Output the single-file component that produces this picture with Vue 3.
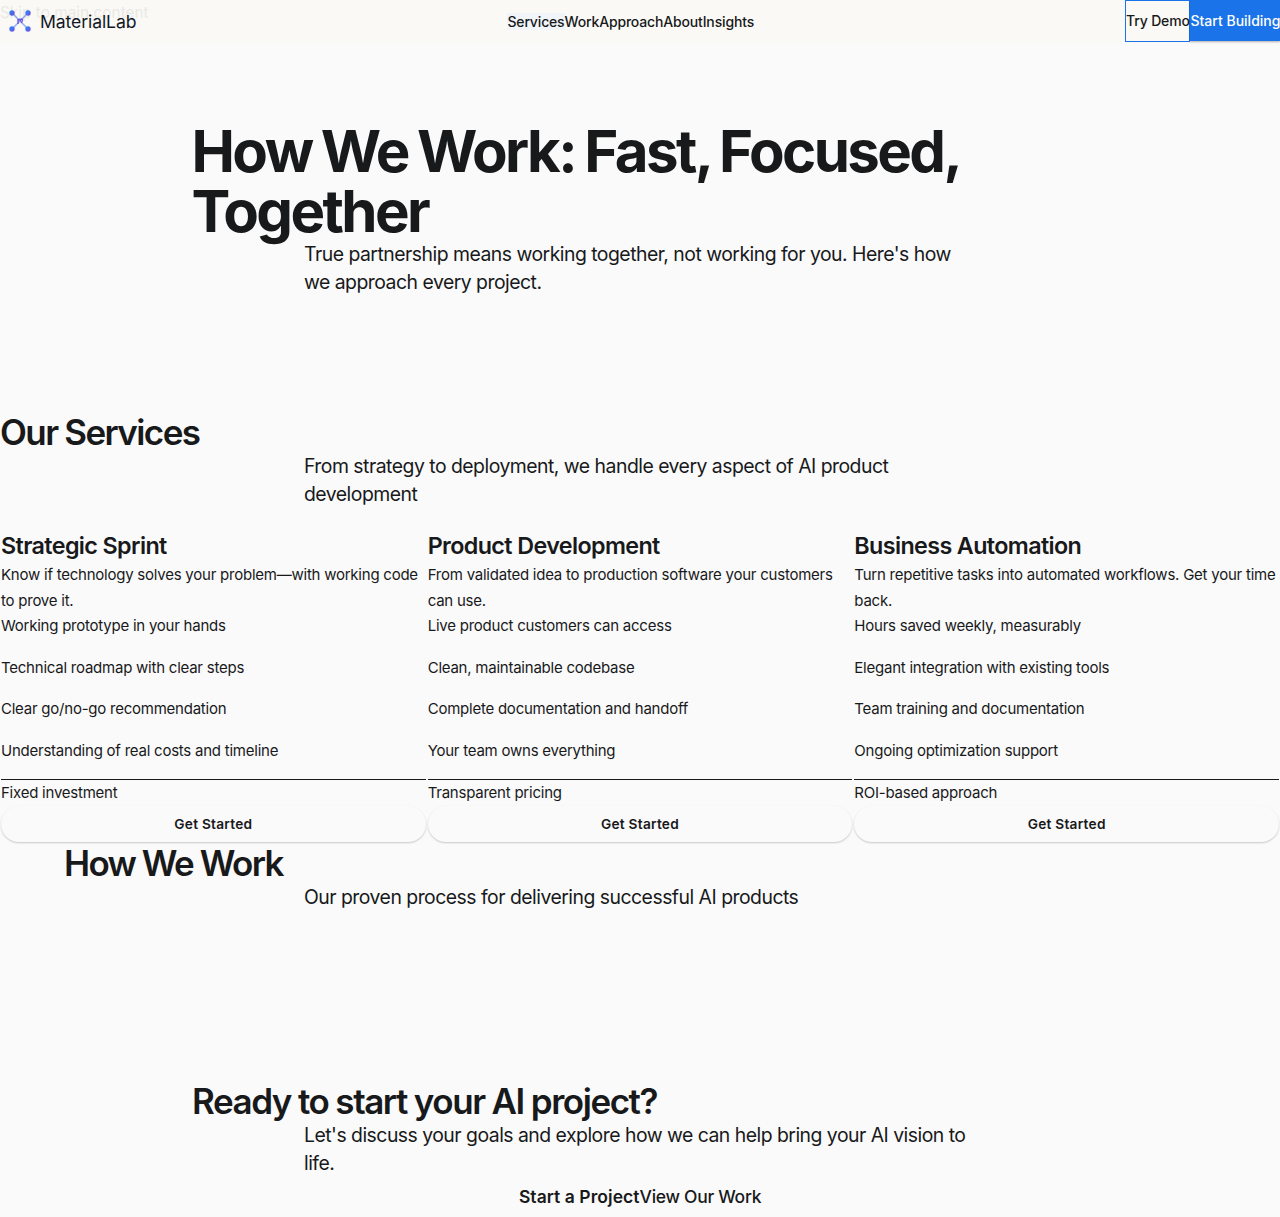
<script setup>
const nav = ['Services', 'Work', 'Approach', 'About', 'Insights']
const services = [
  {
    title: 'Strategic Sprint',
    text: 'Know if technology solves your problem—with working code to prove it.',
    features: ['Working prototype in your hands', 'Technical roadmap with clear steps', 'Clear go/no-go recommendation', 'Understanding of real costs and timeline'],
    price: 'Fixed investment',
  },
  {
    title: 'Product Development',
    text: 'From validated idea to production software your customers can use.',
    features: ['Live product customers can access', 'Clean, maintainable codebase', 'Complete documentation and handoff', 'Your team owns everything'],
    price: 'Transparent pricing',
  },
  {
    title: 'Business Automation',
    text: 'Turn repetitive tasks into automated workflows. Get your time back.',
    features: ['Hours saved weekly, measurably', 'Elegant integration with existing tools', 'Team training and documentation', 'Ongoing optimization support'],
    price: 'ROI-based approach',
  },
]
</script>

<template>
  <div class="page">
    <a class="skip" href="#main">Skip to main content</a>
    <header class="bar">
      <a class="brand">
        <svg class="logo" width="24" height="24" viewBox="0 0 24 24" fill="none">
          <defs>
            <linearGradient id="node" x1="0" y1="0" x2="1" y2="1">
              <stop offset="0.1" stop-color="#2f86fa" />
              <stop offset="1" stop-color="#7a4fe0" />
            </linearGradient>
          </defs>
          <path d="M4 4 20 20M20 4 4 20" stroke="#8fb0f8" stroke-width="1.5" />
          <circle cx="4" cy="4" r="2.7" fill="url(#node)" />
          <circle cx="20" cy="4" r="2.7" fill="url(#node)" />
          <circle cx="4" cy="20" r="2.7" fill="url(#node)" />
          <circle cx="20" cy="20" r="2.7" fill="url(#node)" />
          <path d="M10 15V10M10 11q1.4-1.3 2.2-.2v1.6M12.2 10.6q2-1.5 2.2.2-.1 1.4-.9 3.2" stroke="#6a55e6" stroke-width="1.4" />
        </svg>
        <span class="name">MaterialLab</span>
      </a>
      <nav class="nav">
        <a v-for="(n, i) in nav" :key="n" :class="{ active: i === 0 }">{{ n }}</a>
      </nav>
      <div class="actions">
        <a class="demo">Try Demo</a>
        <a class="start">Start Building</a>
      </div>
    </header>
    <main id="main">
      <section class="hero">
        <h1>How We Work: Fast, Focused, Together</h1>
        <p class="lead">True partnership means working together, not working for you. Here's how we approach every project.</p>
      </section>
      <section class="services">
        <h2>Our Services</h2>
        <p class="lead">From strategy to deployment, we handle every aspect of AI product development</p>
        <div class="cards">
          <article v-for="s in services" :key="s.title" class="card">
            <h3>{{ s.title }}</h3>
            <p>{{ s.text }}</p>
            <ul>
              <li v-for="f in s.features" :key="f">{{ f }}</li>
            </ul>
            <p class="price">{{ s.price }}</p>
            <button>Get Started</button>
          </article>
        </div>
      </section>
      <section class="process">
        <h2>How We Work</h2>
        <p class="lead">Our proven process for delivering successful AI products</p>
      </section>
      <section class="cta">
        <h2>Ready to start your AI project?</h2>
        <p class="lead">Let's discuss your goals and explore how we can help bring your AI vision to life.</p>
        <div class="links"><a class="primary">Start a Project</a><a class="secondary">View Our Work</a></div>
      </section>
    </main>
  </div>
</template>

<style>
body { background: #fafafa; }
</style>

<style scoped>
* { box-sizing: border-box; margin: 0; padding: 0; }
.page { position: relative; height: 1217px; overflow: hidden; background: #fafafa; color: #18191b; font-family: Inter, sans-serif; }
.skip { position: absolute; z-index: 2; left: 0; top: 0; font-size: 15.4px; line-height: 25.5px; color: #18191b; opacity: .07; text-decoration: none; }
.bar { display: flex; align-items: center; justify-content: space-between; height: 42px; background: #faf9f5; }
.brand { display: flex; align-items: center; gap: 8px; width: 136.5px; padding-left: 8px; }
.name { padding-top: 2px; font-size: 17.6px; line-height: 28px; color: #111827; letter-spacing: -.1px; }
.nav { display: flex; font-size: 14px; line-height: 17px; font-weight: 500; letter-spacing: -.16px; }
.active { background: #f1f5f9; }
.actions { display: flex; height: 42px; font-size: 14px; font-weight: 500; line-height: 40px; white-space: nowrap; }
.demo { border: 1px solid #1a73e8; width: 65px; letter-spacing: -.15px; }
.start { width: 90px; height: 41px; line-height: 42px; padding-left: .5px; background: #1a73e8; color: #fff; box-shadow: 0 1px 2px rgba(0, 0, 0, .3); }
h1 { margin: 0 0 -1px -.5px; font-size: 58.2px; line-height: 60px; font-weight: 700; letter-spacing: -2.6px; word-spacing: -1.9px; }
h2 { font-size: 35px; line-height: 40px; font-weight: 600; letter-spacing: -1.45px; word-spacing: -.4px; }
h3 { font-size: 23.3px; line-height: 32px; font-weight: 600; letter-spacing: -.61px; }
.lead { width: 672px; margin: 0 auto; font-size: 19.4px; line-height: 28px; letter-spacing: -.51px; }
.hero { width: 896px; margin: 79px auto 0; }
.services { margin-top: 116px; }
.services h2 { letter-spacing: -1.6px; }
.cards { display: grid; grid-template-columns: repeat(3, 1fr); margin-top: 21px; }
.card { padding: 1px; font-size: 15px; line-height: 25.5px; letter-spacing: -.235px; }
ul { list-style: none; }
li { margin-bottom: 16px; }
.price { border-top: 1px solid #18191b; }
button { display: block; width: 100%; height: 36px; border: 0; border-radius: 18px; background: #fafafa; color: inherit; font: 600 13.7px/36px Inter, sans-serif; letter-spacing: .25px; box-shadow: 0 1px 2px rgba(0, 0, 0, .2); }
.process { width: 1152px; margin: 0 auto; }
.process h2 { letter-spacing: -1.7px; }
.cta { width: 896px; margin: 170px auto 0; }
.links { display: flex; justify-content: center; font-size: 17.5px; line-height: 40px; font-weight: 500; }
.primary { font-weight: 600; letter-spacing: .06px; }
.secondary { letter-spacing: -.3px; }
</style>
